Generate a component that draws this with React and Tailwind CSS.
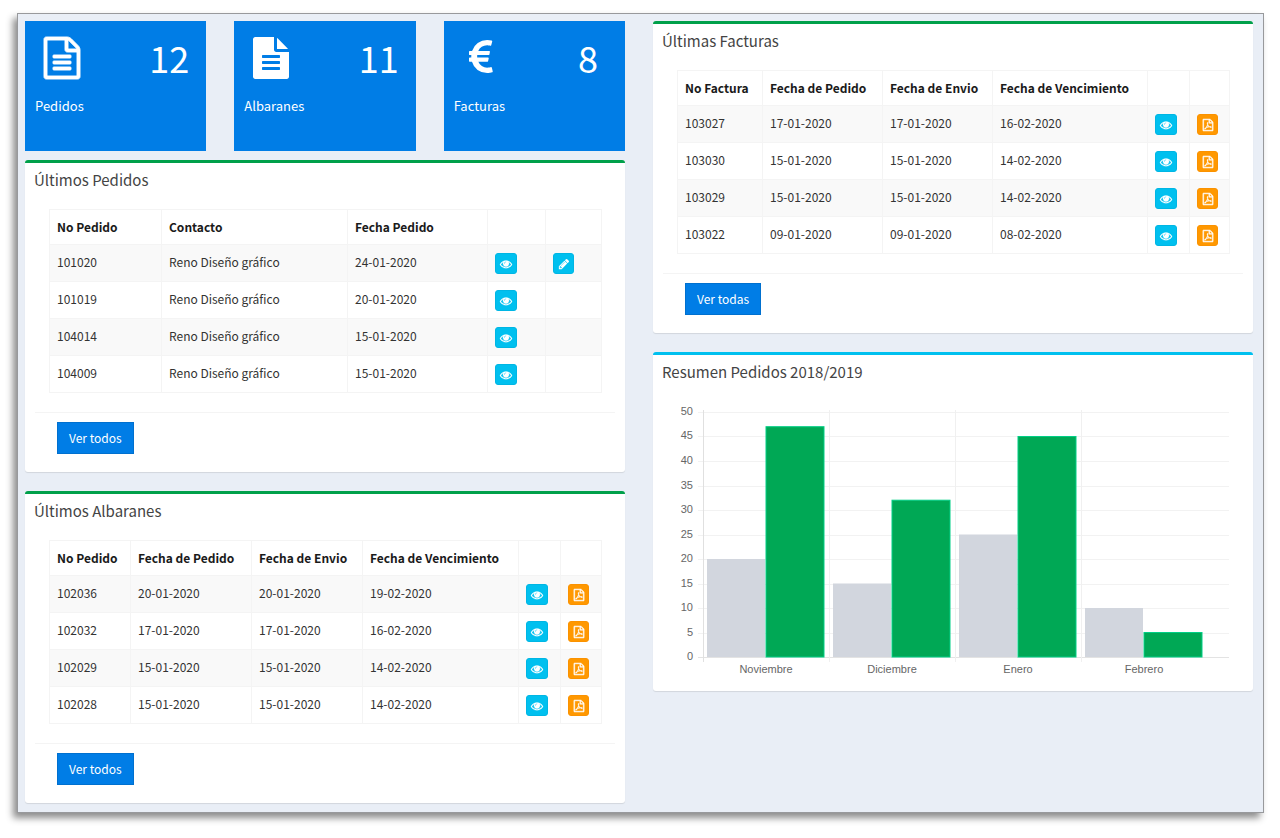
import React from 'react'

// Font Awesome 4 glyphs, 1792 units square
const ICONS = {
  fileTextO:
    'M1596 380q28 28 48 76t20 88v1152q0 40-28 68t-68 28h-1344q-40 0-68-28t-28-68v-1600q0-40 28-68t68-28h896q40 0 88 20t76 48zm-444-244v376h376q-10-29-22-41l-313-313q-12-12-41-22zm384 1528v-1024h-416q-40 0-68-28t-28-68v-416h-768v1536h1280zm-1024-864q0-14 9-23t23-9h704q14 0 23 9t9 23v64q0 14-9 23t-23 9h-704q-14 0-23-9t-9-23v-64zm736 224q14 0 23 9t9 23v64q0 14-9 23t-23 9h-704q-14 0-23-9t-9-23v-64q0-14 9-23t23-9h704zm0 256q14 0 23 9t9 23v64q0 14-9 23t-23 9h-704q-14 0-23-9t-9-23v-64q0-14 9-23t23-9h704z',
  fileText:
    'M1596 476q14 14 28 36h-472v-472q22 14 36 28zm-476 164h544v1056q0 40-28 68t-68 28h-1344q-40 0-68-28t-28-68v-1600q0-40 28-68t68-28h800v544q0 40 28 68t68 28zm160 736v-64q0-14-9-23t-23-9h-704q-14 0-23 9t-9 23v64q0 14 9 23t23 9h704q14 0 23-9t9-23zm0-256v-64q0-14-9-23t-23-9h-704q-14 0-23 9t-9 23v64q0 14 9 23t23 9h704q14 0 23-9t9-23zm0-256v-64q0-14-9-23t-23-9h-704q-14 0-23 9t-9 23v64q0 14 9 23t23 9h704q14 0 23-9t9-23z',
  euro:
    'M1360 1307l35 159q3 12-3 22.5t-17 14.5l-5 1q-4 2-10.5 3.5t-16 4.5-21.5 5.5-25.5 5-30 5-33.5 4.5-36.5 3-38.5 1q-234 0-409-130.5t-238-351.5h-95q-13 0-22.5-9.5t-9.5-22.5v-113q0-13 9.5-22.5t22.5-9.5h66q-2-57 1-105h-67q-14 0-23-9t-9-23v-114q0-14 9-23t23-9h98q67-210 243.5-338t400.5-128q102 0 194 23 11 3 20 15 6 11 3 24l-43 159q-3 13-14 19.5t-24 2.5l-4-1q-4-1-11.5-2.5l-17.5-3.5-22.5-3.5-26-3-29-2.5-29.5-1q-126 0-226 64t-150 176h468q16 0 25 12 10 12 7 26l-24 114q-5 26-32 26h-488q-3 37 0 105h459q15 0 25 12 9 12 6 27l-24 112q-2 11-11 18.5t-20 7.5h-387q48 117 149.5 185.5t228.5 68.5q18 0 36-1.5t33.5-3.5 29.5-4.5 24.5-5 18.5-4.5l12-3 5-2q13-5 26 2 12 7 15 21z',
  eye:
    'M1664 960q-152-236-381-353 61 104 61 225 0 185-131.5 316.5t-316.5 131.5-316.5-131.5-131.5-316.5q0-121 61-225-229 117-381 353 133 205 333.5 326.5t434.5 121.5 434.5-121.5 333.5-326.5zm-720-384q0-20-14-34t-34-14q-125 0-214.5 89.5t-89.5 214.5q0 20 14 34t34 14 34-14 14-34q0-86 61-147t147-61q20 0 34-14t14-34zm848 384q0 34-20 69-140 230-376.5 368.5t-499.5 138.5-499.5-139-376.5-368q-20-35-20-69t20-69q140-229 376.5-368t499.5-139 499.5 139 376.5 368q20 35 20 69z',
  pencil:
    'M491 1536l91-91-235-235-91 91v107h128v128h107zm523-928q0-22-22-22-10 0-17 7l-542 542q-7 7-7 17 0 22 22 22 10 0 17-7l542-542q7-7 7-17zm-54-192l416 416-832 832h-416v-416zm683 96q0 53-37 90l-166 166-416-416 166-165q36-38 90-38 53 0 91 38l235 234q37 39 37 91z',
  pdf:
    'M1596 380q28 28 48 76t20 88v1152q0 40-28 68t-68 28h-1344q-40 0-68-28t-28-68v-1600q0-40 28-68t68-28h896q40 0 88 20t76 48zm-444-244v376h376q-10-29-22-41l-313-313q-12-12-41-22zm384 1528v-1024h-416q-40 0-68-28t-28-68v-416h-768v1536h1280zm-514-593q33 26 84 56 59-7 117-7 147 0 177 49 16 22 2 52 0 1-1 2l-2 2v1q-6 38-71 38-48 0-115-20t-130-53q-221 24-392 83-153 262-242 262-15 0-28-7l-24-12q-1-1-6-5-10-10-6-36 9-40 56-91.5t132-96.5q14-9 23 6 2 2 2 4 52-85 107-197 68-136 104-262-24-82-30.5-159.5t6.5-127.5q11-40 42-40h22q23 0 35 15 18 21 9 68-2 6-4 8 1 3 1 8v30q-2 123-14 192 55 164 146 238zm-576 411q52-24 137-158-51 40-87.5 84t-49.5 74zm398-920q-15 42-2 132 1-7 7-44 0-3 7-43 1-4 4-8-1-1-1-2-1-2-1-3-1-22-13-36 0 1-1 2v2zm-124 661q135-54 284-81-2-1-13-9.5t-16-13.5q-76-67-127-176-27 86-83 197-30 56-45 83zm646-16q-24-24-140-24 76 28 124 28 14 0 18-1 0-1-2-3z',
}

// extra weight for the outlined glyphs
const STROKES = { fileTextO: 40, pdf: 70, eye: 40 }

const Icon = ({ name, className }) => (
  <svg
    viewBox="0 0 1792 1792"
    fill="currentColor"
    stroke="currentColor"
    strokeWidth={STROKES[name] || 0}
    className={`overflow-visible ${className}`}
    aria-hidden="true"
  >
    <path d={ICONS[name]} />
  </svg>
)

const tiles = [
  { label: 'Pedidos', count: 12, icon: 'fileTextO' },
  { label: 'Albaranes', count: 11, icon: 'fileText' },
  { label: 'Facturas', count: 8, icon: 'euro' },
]

const pedidos = {
  cols: ['w-[112px]', 'w-[186px]', 'w-[140px]', 'w-[58px]', 'w-[56px]'],
  head: ['No Pedido', 'Contacto', 'Fecha Pedido'],
  rows: [
    { cells: ['101020', 'Reno Diseño gráfico', '24-01-2020'], actions: ['eye', 'pencil'] },
    { cells: ['101019', 'Reno Diseño gráfico', '20-01-2020'], actions: ['eye', null] },
    { cells: ['104014', 'Reno Diseño gráfico', '15-01-2020'], actions: ['eye', null] },
    { cells: ['104009', 'Reno Diseño gráfico', '15-01-2020'], actions: ['eye', null] },
  ],
}

const albaranes = {
  cols: ['w-[81px]', 'w-[121px]', 'w-[111px]', 'w-[156px]', 'w-[42px]', 'w-[41px]'],
  head: ['No Pedido', 'Fecha de Pedido', 'Fecha de Envio', 'Fecha de Vencimiento'],
  rows: [
    { cells: ['102036', '20-01-2020', '20-01-2020', '19-02-2020'], actions: ['eye', 'pdf'] },
    { cells: ['102032', '17-01-2020', '17-01-2020', '16-02-2020'], actions: ['eye', 'pdf'] },
    { cells: ['102029', '15-01-2020', '15-01-2020', '14-02-2020'], actions: ['eye', 'pdf'] },
    { cells: ['102028', '15-01-2020', '15-01-2020', '14-02-2020'], actions: ['eye', 'pdf'] },
  ],
}

const facturas = {
  cols: ['w-[85px]', 'w-[120px]', 'w-[110px]', 'w-[155px]', 'w-[42px]', 'w-[40px]'],
  head: ['No Factura', 'Fecha de Pedido', 'Fecha de Envio', 'Fecha de Vencimiento'],
  rows: [
    { cells: ['103027', '17-01-2020', '17-01-2020', '16-02-2020'], actions: ['eye', 'pdf'] },
    { cells: ['103030', '15-01-2020', '15-01-2020', '14-02-2020'], actions: ['eye', 'pdf'] },
    { cells: ['103029', '15-01-2020', '15-01-2020', '14-02-2020'], actions: ['eye', 'pdf'] },
    { cells: ['103022', '09-01-2020', '09-01-2020', '08-02-2020'], actions: ['eye', 'pdf'] },
  ],
}

const resumen = [
  { mes: 'Noviembre', anterior: 20, actual: 47 },
  { mes: 'Diciembre', anterior: 15, actual: 32 },
  { mes: 'Enero', anterior: 25, actual: 45 },
  { mes: 'Febrero', anterior: 10, actual: 5 },
]

const actionStyles = {
  eye: { label: 'Ver', className: 'w-[22px] bg-[#00c0ef] border-[#00b6e4]' },
  pencil: { label: 'Editar', className: 'w-[21px] bg-[#00c0ef] border-[#00b6e4]' },
  pdf: { label: 'PDF', className: 'w-[21px] bg-[#ff9800] border-[#fb9200]' },
}

const ActionButton = ({ type }) => (
  <button
    type="button"
    aria-label={actionStyles[type].label}
    className={`flex h-[21px] items-center justify-center rounded-[3px] border text-white ${actionStyles[type].className}`}
  >
    <Icon name={type} className="h-3 w-3 shrink-0" />
  </button>
)

const Tile = ({ label, count, icon }) => (
  <div className="h-[130px] bg-[#007de6] pt-4 text-white">
    <div className="flex h-[60px] justify-between">
      <div className="flex w-[74px] justify-center">
        <Icon name={icon} className="h-[42px] w-[42px]" />
      </div>
      <div className="w-[74px] text-center text-[36px] leading-[40px]">{count}</div>
    </div>
    <p className="px-[10px] text-[13px] leading-[18px]">{label}</p>
  </div>
)

const Panel = ({ title, accent, children }) => (
  <section className={`rounded-[3px] border-t-[3px] bg-white shadow-[0_1px_1px_rgba(0,0,0,0.1)] ${accent}`}>
    <h3 className="px-[9px] pt-[7px] text-[15px] leading-[20px] text-[#444]">{title}</h3>
    {children}
  </section>
)

const TablePanel = ({ title, data, button }) => (
  <Panel title={title} accent="border-[#00a04a]">
    <div className="px-6 pt-[19px]">
      <table className="w-full table-fixed border-collapse text-left text-[12px] leading-[18px]">
        <colgroup>
          {data.cols.map((width, i) => (
            <col key={i} className={width} />
          ))}
        </colgroup>
        <thead>
          <tr>
            {data.head.map((name) => (
              <th key={name} className="whitespace-nowrap border border-[#f4f4f4] px-[7px] py-2 font-bold text-[#1a1a1a]">
                {name}
              </th>
            ))}
            <td className="border border-[#f4f4f4]" />
            <td className="border border-[#f4f4f4]" />
          </tr>
        </thead>
        <tbody>
          {data.rows.map((row) => (
            <tr key={row.cells[0]} className="text-[#333] odd:bg-[#f9f9f9]">
              {row.cells.map((cell, i) => (
                <td key={i} className="whitespace-nowrap border border-[#f4f4f4] px-[7px] pt-2 pb-[7px] align-top">
                  {cell}
                </td>
              ))}
              {row.actions.map((type, i) => (
                <td key={i} className="border border-[#f4f4f4] px-[7px] pt-2 pb-[7px] align-top">
                  {type && <ActionButton type={type} />}
                </td>
              ))}
            </tr>
          ))}
        </tbody>
      </table>
    </div>
    <div className="mx-[10px] mt-[19px] border-t border-[#f4f4f4] px-[22px] pt-[9px] pb-[18px]">
      <button
        type="button"
        className="h-8 border border-[#0070cf] bg-[#007de6] px-[11px] text-[12px] leading-[18px] text-white"
      >
        {button}
      </button>
    </div>
  </Panel>
)

const AXIS_X = 26
const BASE_Y = 255
const STEP = 126
const UNIT = 4.9

const BarChart = () => (
  <svg
    viewBox="0 0 552 289"
    className="block w-full"
    fontFamily="'Liberation Sans', Arial, sans-serif"
    fontSize="11"
    fill="#666"
    role="img"
    aria-label="Resumen Pedidos"
  >
    {[0, 5, 10, 15, 20, 25, 30, 35, 40, 45, 50].map((value) => {
      const y = Math.round(BASE_Y - value * UNIT)
      return (
        <g key={value}>
          <rect x={AXIS_X - 5} y={y} width="531" height="1" fill={value === 0 ? '#e3e3e3' : '#f2f2f2'} />
          <text x="16" y={y + 3} textAnchor="end">
            {value}
          </text>
        </g>
      )
    })}
    {resumen.map((item, i) => {
      const x = AXIS_X + i * STEP
      return (
        <g key={item.mes}>
          <rect x={x} y="8" width="1" height="252" fill={i === 0 ? '#e0e0e0' : '#f0f0f0'} />
          <rect
            x={x + 4}
            y={BASE_Y - item.anterior * UNIT}
            width="58"
            height={item.anterior * UNIT}
            fill="#d2d6de"
          />
          <rect
            x={x + 63}
            y={BASE_Y - item.actual * UNIT}
            width="58"
            height={item.actual * UNIT}
            fill="#00a855"
            stroke="#00cf86"
            strokeWidth="1"
          />
          <text x={x + 63} y="271" textAnchor="middle">
            {item.mes}
          </text>
        </g>
      )
    })}
  </svg>
)

const App = () => {
  return (
    <div className="bg-white pt-[13px] pr-4 pb-[25px] pl-[17px] font-['Noto_Sans_CJK_JP','Source_Sans_Pro',sans-serif]">
      <main className="grid grid-cols-2 items-start gap-x-7 border border-[#98999c] bg-[#e9eef6] pt-[7px] pr-[10px] pb-[9px] pl-[7px] shadow-[-4px_5px_7px_rgba(0,0,0,0.45)]">
        <div>
          <div className="mb-[9px] grid grid-cols-3 gap-7">
            {tiles.map((tile) => (
              <Tile key={tile.label} {...tile} />
            ))}
          </div>
          <div className="flex flex-col gap-[19px]">
            <TablePanel title="Últimos Pedidos" data={pedidos} button="Ver todos" />
            <TablePanel title="Últimos Albaranes" data={albaranes} button="Ver todos" />
          </div>
        </div>

        <div className="flex flex-col gap-[19px]">
          <TablePanel title="Últimas Facturas" data={facturas} button="Ver todas" />
          <Panel title="Resumen Pedidos 2018/2019" accent="border-[#00c0ef]">
            <div className="px-6 pt-5">
              <BarChart />
            </div>
          </Panel>
        </div>
      </main>
    </div>
  )
}

export default App
